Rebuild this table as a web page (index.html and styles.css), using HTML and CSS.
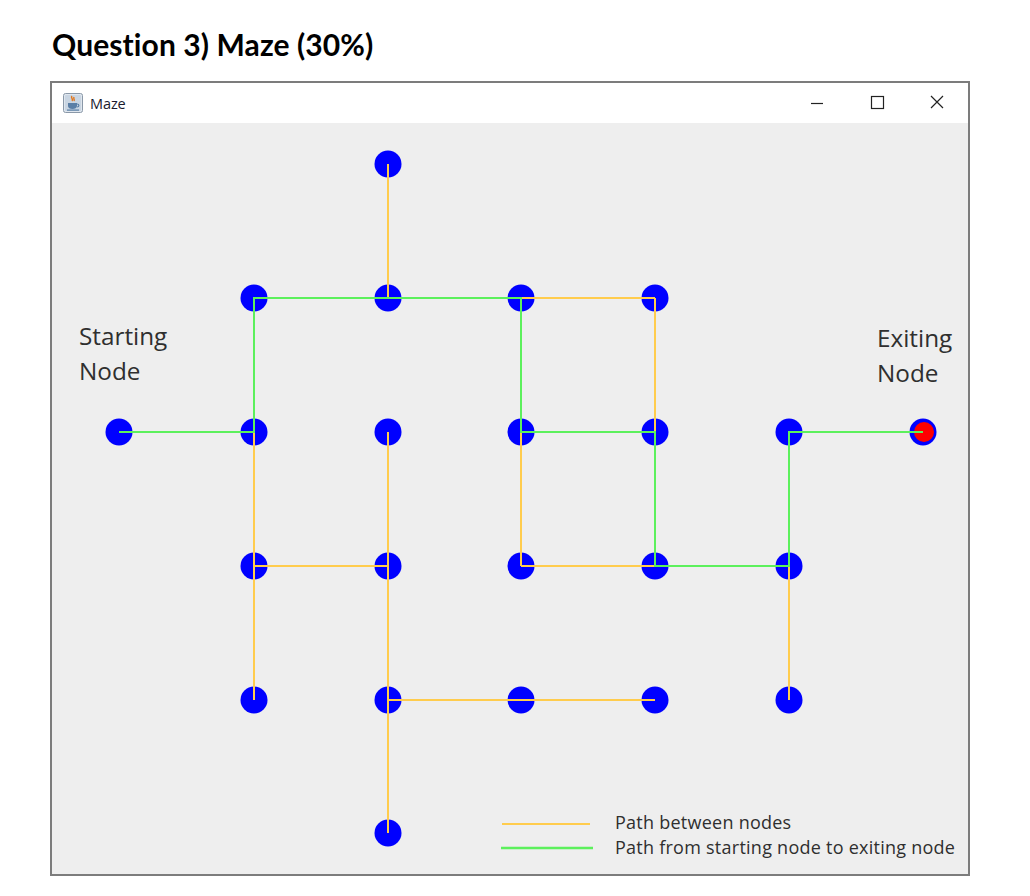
FILE: index.html
```html
<!DOCTYPE html>
<html>
<head>
<meta charset="utf-8">
<title>Maze</title>
<link rel="stylesheet" href="styles.css">
</head>
<body>
<h1 class="question">Question 3) Maze (30%)</h1>
<div class="window">
  <div class="titlebar">
    <div class="title-left">
      <svg class="app-icon" width="20" height="20" viewBox="0 0 20 20">
        <rect x="0.5" y="0.5" width="19" height="19" rx="2" fill="#dfe6ee" stroke="#8a98a8"/>
        <rect x="2" y="2" width="16" height="16" rx="1" fill="#c9d5e2"/>
        <path d="M9 3 C7 5 11 6 9 8 M11 4 C10 6 12 6 11 8" stroke="#e2761b" stroke-width="1.4" fill="none"/>
        <path d="M5 10 H14 V13 C14 15 12 16 9.5 16 C7 16 5 15 5 13 Z" fill="#5b7fa6"/>
        <path d="M14 11 C16.5 11 16.5 14 14 14" stroke="#5b7fa6" stroke-width="1.2" fill="none"/>
        <rect x="4" y="16.5" width="12" height="1.2" fill="#5b7fa6"/>
      </svg>
      <span class="win-title">Maze</span>
    </div>
    <div class="controls">
      <svg class="ctl" width="46" height="30" viewBox="0 0 46 30"><line x1="17" y1="15.5" x2="29" y2="15.5" stroke="#222" stroke-width="1.2"/></svg>
      <svg class="ctl" width="46" height="30" viewBox="0 0 46 30"><rect x="17.5" y="8.5" width="12" height="12" fill="none" stroke="#222" stroke-width="1.2"/></svg>
      <svg class="ctl" width="46" height="30" viewBox="0 0 46 30"><path d="M17 8 L29 20 M29 8 L17 20" stroke="#222" stroke-width="1.2"/></svg>
    </div>
  </div>
  <div class="content">
    <svg class="maze" width="916" height="751" viewBox="52 123 916 751">
      <g class="nodes" fill="#0000ff">
        <circle cx="388" cy="164" r="13.5"/>
        <circle cx="254" cy="298" r="13.5"/>
        <circle cx="388" cy="298" r="13.5"/>
        <circle cx="521" cy="298" r="13.5"/>
        <circle cx="655" cy="298" r="13.5"/>
        <circle cx="119" cy="432" r="13.5"/>
        <circle cx="254" cy="432" r="13.5"/>
        <circle cx="388" cy="432" r="13.5"/>
        <circle cx="521" cy="432" r="13.5"/>
        <circle cx="655" cy="432" r="13.5"/>
        <circle cx="789" cy="432" r="13.5"/>
        <circle cx="923" cy="432" r="13.5"/>
        <circle cx="254" cy="566" r="13.5"/>
        <circle cx="388" cy="566" r="13.5"/>
        <circle cx="521" cy="566" r="13.5"/>
        <circle cx="655" cy="566" r="13.5"/>
        <circle cx="789" cy="566" r="13.5"/>
        <circle cx="254" cy="700" r="13.5"/>
        <circle cx="388" cy="700" r="13.5"/>
        <circle cx="521" cy="700" r="13.5"/>
        <circle cx="655" cy="700" r="13.5"/>
        <circle cx="789" cy="700" r="13.5"/>
        <circle cx="388" cy="833" r="13.5"/>
      </g>
      <circle cx="924" cy="432" r="10" fill="#ff0000"/>
      <g class="edges" stroke="#ffcc4d" stroke-width="2" fill="none">
        <line x1="388" y1="164" x2="388" y2="298"/>
        <line x1="521" y1="298" x2="655" y2="298"/>
        <line x1="655" y1="298" x2="655" y2="432"/>
        <line x1="254" y1="432" x2="254" y2="700"/>
        <line x1="254" y1="566" x2="388" y2="566"/>
        <line x1="388" y1="432" x2="388" y2="833"/>
        <line x1="521" y1="432" x2="521" y2="566"/>
        <line x1="521" y1="566" x2="655" y2="566"/>
        <line x1="789" y1="566" x2="789" y2="700"/>
        <line x1="388" y1="700" x2="655" y2="700"/>
      </g>
      <polyline class="solution" points="119,432 254,432 254,298 521,298 521,432 655,432 655,566 789,566 789,432 923,432" stroke="#5cf05c" stroke-width="2" fill="none"/>
      <text class="label" x="79" y="345">Starting</text>
      <text class="label" x="79" y="380">Node</text>
      <text class="label" x="877" y="347">Exiting</text>
      <text class="label" x="877" y="382">Node</text>
      <line x1="502" y1="824" x2="590" y2="824" stroke="#ffcc4d" stroke-width="2"/>
      <line x1="501" y1="848" x2="593" y2="848" stroke="#5cf05c" stroke-width="2.5"/>
      <text class="legend" x="615" y="829">Path between nodes</text>
      <text class="legend" x="615" y="854">Path from starting node to exiting node</text>
    </svg>
  </div>
</div>
</body>
</html>
```
FILE: styles.css
```css
html, body {
  margin: 0;
  padding: 0;
  background: #ffffff;
}
body {
  width: 1030px;
  height: 896px;
  overflow: hidden;
}
.question {
  margin: 0;
  padding: 24px 0 0 52px;
  height: 57px;
  box-sizing: border-box;
  font-family: "Lato", "Open Sans", sans-serif;
  font-weight: bold;
  font-size: 30px;
  line-height: 40px;
  letter-spacing: 0.1px;
  color: #000;
}
.window {
  margin-left: 50px;
  margin-top: 24px;
  width: 920px;
  height: 795px;
  box-sizing: border-box;
  border: 2px solid #7c7c7c;
  display: flex;
  flex-direction: column;
  background: #eeeeee;
}
.titlebar {
  height: 40px;
  flex: none;
  background: #ffffff;
  display: flex;
  align-items: center;
  justify-content: space-between;
}
.title-left {
  display: flex;
  align-items: center;
  padding-left: 11px;
  gap: 7px;
}
.app-icon {
  display: block;
}
.win-title {
  font-family: "Open Sans", "Noto Sans", sans-serif;
  font-size: 14.5px;
  color: #1a1a2e;
  letter-spacing: -0.1px;
}
.controls {
  display: flex;
  gap: 14px;
  padding-right: 8px;
}
.ctl {
  display: block;
}
.content {
  flex: 1;
  overflow: hidden;
}
.maze {
  display: block;
}
.label {
  font-family: "Open Sans", "Noto Sans", sans-serif;
  font-size: 24.3px;
  fill: #2f2f2f;
}
.legend {
  font-family: "Open Sans", "Noto Sans", sans-serif;
  font-size: 18px;
  letter-spacing: 0.25px;
  fill: #2f2f2f;
}
```
